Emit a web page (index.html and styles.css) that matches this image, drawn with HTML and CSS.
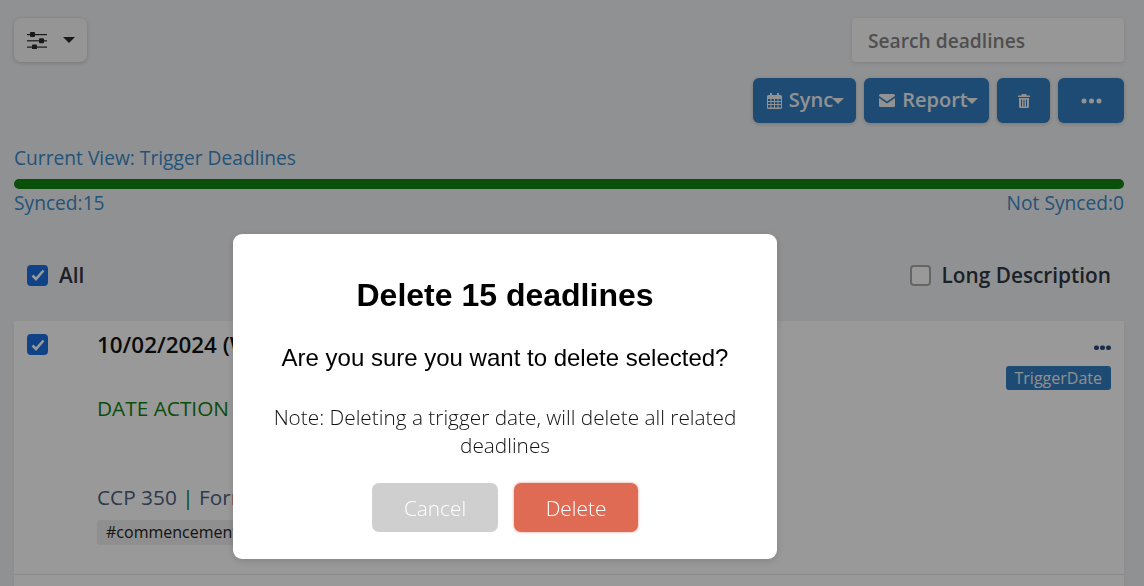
FILE: index.html
```html
<!DOCTYPE html>
<html lang="en">
<head>
<meta charset="utf-8">
<title>Deadlines</title>
<link rel="stylesheet" href="styles.css">
</head>
<body>
<main class="page">
  <div class="top-row">
    <button class="filter-btn">
      <svg class="sliders" width="20" height="17" viewBox="0 0 20 17"><g fill="#2b2b2b"><rect x="0" y="2" width="20" height="1.200"/><rect x="0" y="8.200" width="20" height="1.200"/><rect x="0" y="14.500" width="20" height="1.200"/><rect x="3" y="0" width="5" height="5" rx="1"/><rect x="12" y="6.300" width="5" height="5" rx="1"/><rect x="5" y="12.500" width="5" height="5" rx="1"/></g></svg>
      <span class="caret dark"></span>
    </button>
    <div class="search">Search deadlines</div>
  </div>
  <div class="actions">
    <button class="btn sync">
      <svg width="15" height="16" viewBox="0 0 15 16"><path fill="currentColor" d="M3 0h2v2h5V0h2v2h1.500A1.500 1.500 0 0 1 15 3.500v11a1.500 1.500 0 0 1-1.500 1.500h-12A1.500 1.500 0 0 1 0 14.500v-11A1.500 1.500 0 0 1 1.500 2H3zM1 6v2h2.500V6zm3.500 0v2h2.500V6zM8 6v2h2.500V6zm3.500 0v2H14V6zM1 9v2h2.500V9zm3.500 0v2h2.500V9zM8 9v2h2.500V9zm3.500 0v2H14V9zM1 12v2.500h2.500V12zm3.500 0v2.500h2.500V12zM8 12v2.500h2.500V12zm3.500 0v2.500H14V12z"/></svg>
      <span>Sync</span><span class="caret"></span>
    </button>
    <button class="btn report">
      <svg width="16" height="13" viewBox="0 0 16 13"><path fill="currentColor" d="M1.500 0h13A1.500 1.500 0 0 1 16 1.500v.6L8 7.500 0 2.100v-.6A1.500 1.500 0 0 1 1.500 0zM0 4l8 5.400L16 4v7.500a1.500 1.500 0 0 1-1.500 1.500h-13A1.500 1.500 0 0 1 0 11.500z"/></svg>
      <span>Report</span><span class="caret"></span>
    </button>
    <button class="btn trash">
      <svg width="12" height="14" viewBox="0 0 12 14"><path fill="currentColor" d="M4 0h4l.7 1.500H12V3H0V1.500h3.300zM1 4h10v8.500A1.500 1.500 0 0 1 9.500 14h-7A1.500 1.500 0 0 1 1 12.500zm2 1.500v7h1v-7zm2.500 0v7h1v-7zm2.500 0v7h1v-7z"/></svg>
    </button>
    <button class="btn more">
      <svg class="more-dots" width="21" height="6" viewBox="0 0 21 6"><g fill="currentColor"><circle cx="3" cy="3" r="2.500"/><circle cx="10.500" cy="3" r="2.500"/><circle cx="18" cy="3" r="2.500"/></g></svg>
    </button>
  </div>
  <div class="current-view">Current View: Trigger Deadlines</div>
  <div class="progress"></div>
  <div class="sync-counts"><span>Synced:15</span><span>Not Synced:0</span></div>
  <div class="select-row">
    <label class="check-label"><span class="box checked"><svg width="14" height="12" viewBox="0 0 14 12"><path d="M1.500 6.500 5 10l7.500-8.500" fill="none" stroke="#fff" stroke-width="2.600"/></svg></span>All</label>
    <label class="check-label"><span class="box"></span>Long Description</label>
  </div>
  <article class="card">
    <span class="box checked card-check"><svg width="14" height="12" viewBox="0 0 14 12"><path d="M1.500 6.500 5 10l7.500-8.500" fill="none" stroke="#fff" stroke-width="2.600"/></svg></span>
    <div class="card-body">
      <div class="date">10/02/2024 (Wed)</div>
      <div class="action">DATE ACTION FILED</div>
      <div class="rule">CCP 350 <span class="sep">|</span> Form</div>
      <span class="hash">#commencement</span>
    </div>
    <div class="card-side">
      <svg class="card-dots" width="17" height="5" viewBox="0 0 17 5"><g fill="#2b4a78"><rect y="0.500" width="5" height="4.500" rx="2"/><rect x="6" y="0.500" width="5" height="4.500" rx="2"/><rect x="12" y="0.500" width="5" height="4.500" rx="2"/></g></svg>
      <span class="badge">TriggerDate</span>
    </div>
  </article>
  <div class="card next"></div>
</main>
<div class="overlay">
  <section class="modal">
    <h2>Delete 15 deadlines</h2>
    <p class="question">Are you sure you want to delete selected?</p>
    <p class="note">Note: Deleting a trigger date, will delete all related deadlines</p>
    <div class="modal-actions">
      <button class="m-btn cancel">Cancel</button>
      <button class="m-btn delete">Delete</button>
    </div>
  </section>
</div>
</body>
</html>
```
FILE: styles.css
```css
* { box-sizing: border-box; }
html, body { margin: 0; height: 586px; overflow: hidden; }
body { background: #f1f2f4; font-family: "Open Sans", sans-serif; color: #212529; }
button { font-family: inherit; border: 0; margin: 0; }
.page { padding: 18px 20px 0 14px; height: 586px; overflow: hidden; }
.top-row { display: flex; justify-content: space-between; height: 44px; }
.filter-btn { width: 73px; height: 44px; background: #f8f8f8; border-radius: 7px; box-shadow: 0 1px 4px rgba(0,0,0,.18); display: flex; align-items: center; padding: 0 0 0 13px; gap: 16px; }
.caret { display: inline-block; width: 0; height: 0; border-left: 6px solid transparent; border-right: 6px solid transparent; border-top: 6px solid currentColor; }
.caret.dark { color: #2b2b2b; }
.search { width: 272px; height: 44px; background: #fcfcfc; border-radius: 4px; box-shadow: 0 1px 4px rgba(0,0,0,.12); padding: 0 16px; line-height: 45px; font-size: 19.200px; font-weight: 600; color: #848484; }
.actions { display: flex; justify-content: flex-end; gap: 8px; margin-top: 16px; height: 45px; }
.btn { background: #337dc0; color: #f4f4f4; height: 45px; border-radius: 6px; box-shadow: 0 1px 4px rgba(0,0,0,.2); display: flex; align-items: center; font-size: 20px; font-weight: 600; padding: 0 0 2px; justify-content: center; }
.btn svg { flex: none; margin-top: 2px; }
.sync { width: 103px; gap: 7px; padding-left: 2px; }
.sync .caret { margin-left: -8px; margin-top: 2px; }
.report { width: 125px; gap: 7px; padding-left: 4px; }
.report .caret { margin-left: -9px; margin-top: 2px; }
.trash { width: 53px; }
.more { width: 66px; }
.btn .more-dots { margin-top: 3px; }
.current-view { margin-top: 22px; font-size: 19.200px; line-height: 26px; color: #3b8bca; }
.progress { height: 10px; margin-top: 8px; border-radius: 5px; background: #118411; }
.sync-counts { display: flex; justify-content: space-between; font-size: 19.200px; line-height: 24px; color: #3b8bca; margin-top: 2px; }
.select-row { display: flex; justify-content: space-between; align-items: center; height: 30px; padding: 0 13px; margin-top: 45px; }
.check-label { display: flex; align-items: center; gap: 11px; font-size: 20.800px; font-weight: 600; color: #303642; }
.box { width: 21px; height: 21px; border-radius: 4px; border: 2px solid #a8a8a8; background: #fff; display: flex; align-items: center; justify-content: center; flex: none; }
.box.checked { background: #1a6fe0; border-color: #1a6fe0; }
.card { background: #ffffff; margin-top: 31px; height: 253px; display: flex; position: relative; box-shadow: 0 1px 4px rgba(0,0,0,.06); }
.card-check { margin: 13px 0 0 13px; }
.card-body { margin-left: 49px; padding-top: 9px; flex: 1; }
.date { font-size: 22.400px; font-weight: 600; color: #111; line-height: 30px; }
.action { font-size: 20.800px; line-height: 28px; margin-top: 34px; color: #148014; }
.rule { font-size: 20.800px; line-height: 28px; margin-top: 61px; color: #4d6080; }
.sep { color: #148014; }
.hash { display: inline-block; margin-top: 9px; background: #eeeeee; border-radius: 3px; font-size: 16px; line-height: 25px; padding: 0 9px; color: #222; }
.card-side { position: absolute; top: 24px; right: 13px; display: flex; flex-direction: column; align-items: flex-end; gap: 16px; }
.badge { background: #337dc0; color: #eee; font-size: 16px; line-height: 24px; border-radius: 3px; padding: 0 9px; }
.next { margin-top: 1px; }
.overlay { position: fixed; inset: 0; background: rgba(0,0,0,.4); padding: 234px 0 0 233px; }
.modal { width: 544px; height: 325px; background: #fff; border-radius: 9px; text-align: center; padding: 40px 20px 0; box-shadow: 0 2px 8px rgba(0,0,0,.15); }
.modal h2 { margin: 0; font-family: "Liberation Sans", sans-serif; font-weight: 700; font-size: 32px; line-height: 42px; color: #000; }
.question { margin: 27px 0 0; font-family: "Liberation Sans", sans-serif; font-size: 24px; line-height: 30px; color: #000; }
.note { margin: 30px 0 0; font-size: 20.800px; font-weight: 300; line-height: 28px; color: #111; }
.modal-actions { display: flex; justify-content: center; gap: 16px; margin-top: 24px; }
.m-btn { height: 49px; border-radius: 7px; font-size: 20.800px; font-weight: 300; color: #fff; padding: 0; }
.cancel { width: 126px; background: #cfcfcf; }
.delete { width: 124px; background: #e06b55; box-shadow: 0 0 3px rgba(224,107,85,.7); }
```
